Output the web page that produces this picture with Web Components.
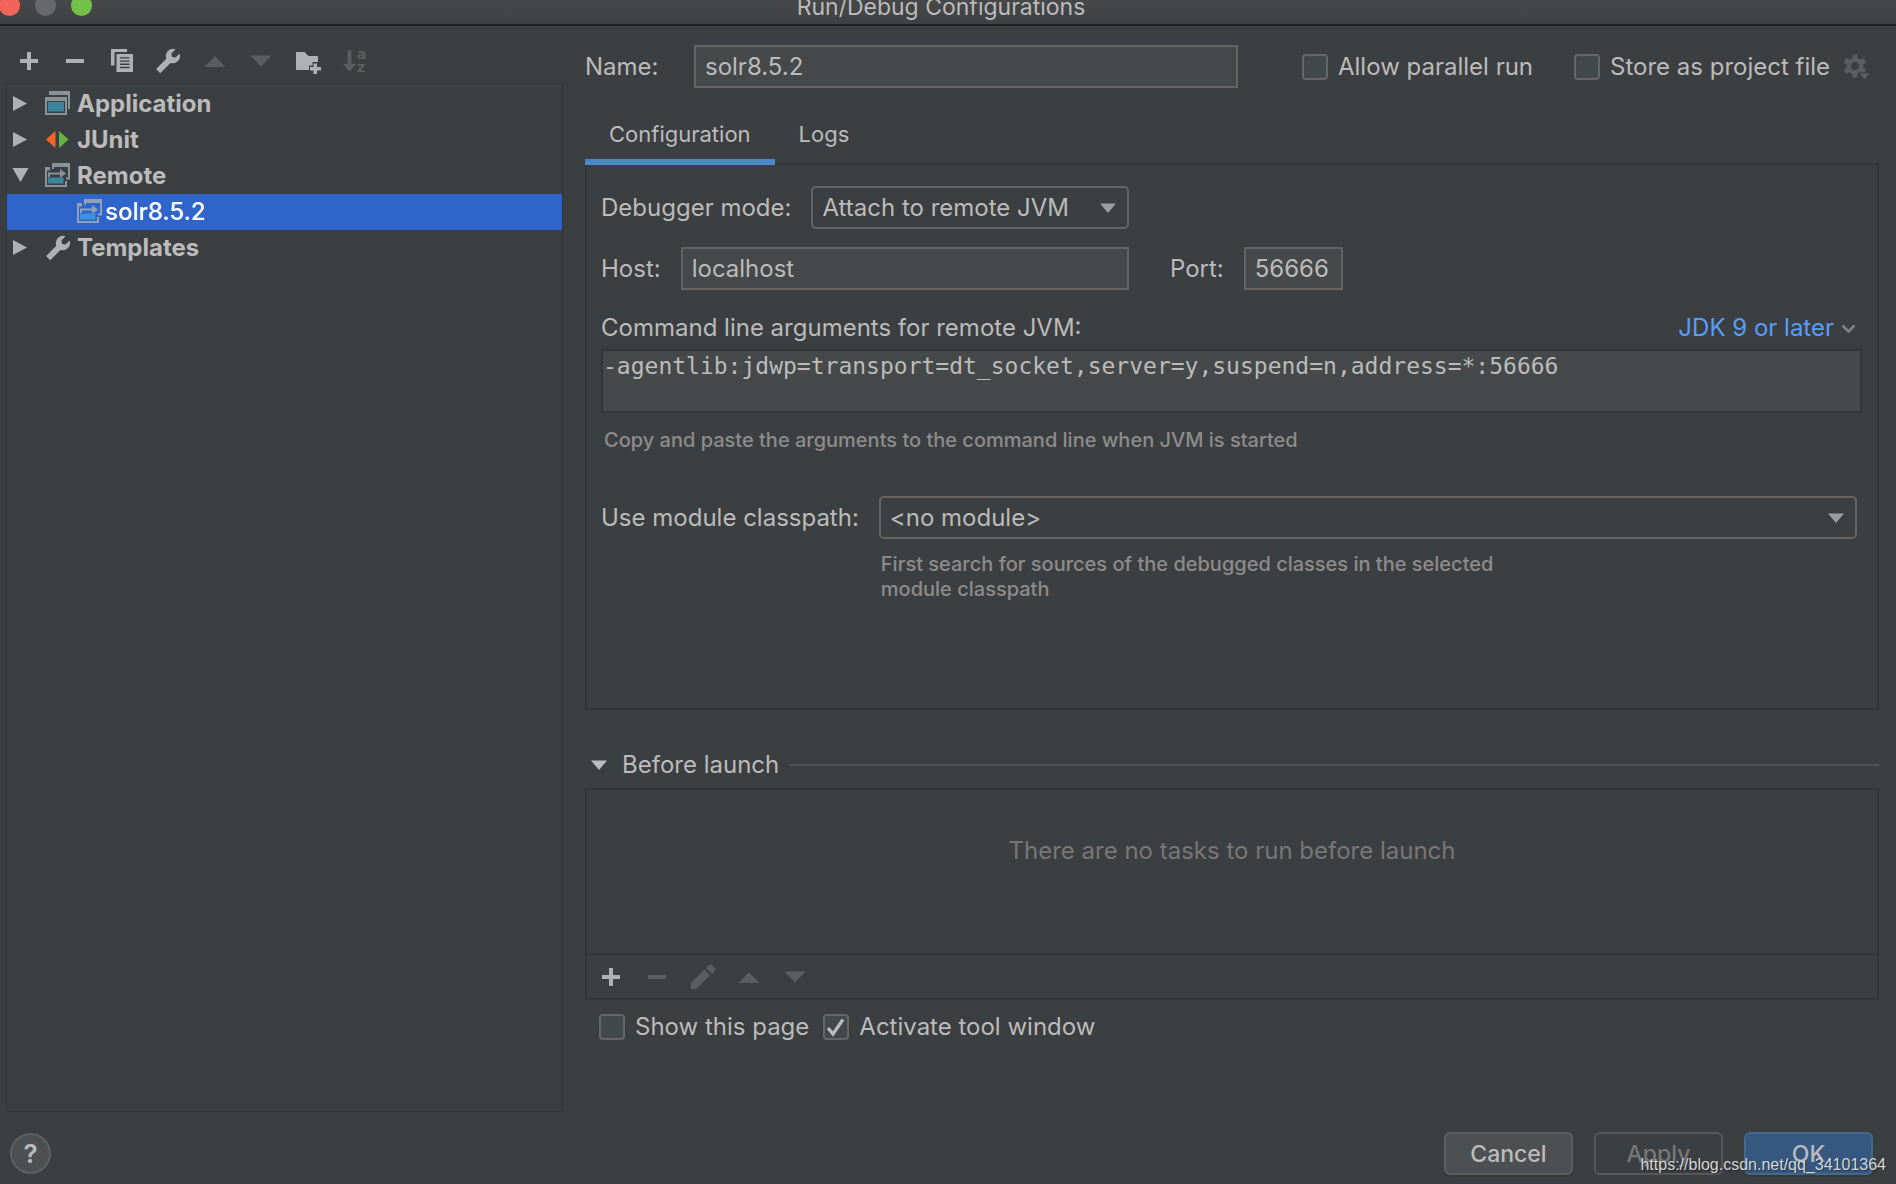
<!DOCTYPE html>
<html lang="en">
<head>
<meta charset="utf-8">
<title>Run/Debug Configurations</title>
<style>
  html, body { margin: 0; }
  body {
    background: #3c3f41;
    color: #bbbbbb;
    font: 24px/36px Inter, "Liberation Sans", sans-serif;
    --line: #343536;
    --field: #45494a;
    --field-border: #646464;
    --muted: #8c8c8c;
    --disabled: #5c5d5e;
  }
</style>
</head>
<body>
<run-config-dialog></run-config-dialog>

<script>
const ICONS = {
  add: '<path d="M12 5h4v7h7v4h-7v7h-4v-7H5v-4h7z"/>',
  remove: '<path d="M5 12h18v4H5z"/>',
  copy: '<path d="M3 2h16v3H6.500v13.500H3z"/><path fill-rule="evenodd" d="M8.500 7H25v18H8.500zM12 10.200v1.400h9.500v-1.400zM12 13.400v1.400h9.500v-1.400zM12 16.600v1.400h9.500v-1.400zM12 19.800v1.400h9.500v-1.400z"/>',
  wrench: '<path d="M21.500 2.300L17.400 6.500l.7 3.400 3.400.7 4.100-4.100A7.300 7.300 0 0 1 16.500 15.900L6.200 26.200 2.100 22.100 12.300 11.700A7.300 7.300 0 0 1 21.500 2.300z"/>',
  up: '<path d="M3.500 20L14 9l10.500 11z"/>',
  down: '<path d="M3.500 8.500h21L14 19.500z"/>',
  folder: '<path d="M2 5h8.500l4 4H24v6h-5.500v3.500H15V23H2z"/><path d="M19.500 16.500h3.500v3.500h4v3.500h-4V27h-3.500v-3.500h-3.500V20h3.500z"/>',
  sort: '<path d="M7.500 3.500h4V17H16l-6.500 7.500L3 17h4.500z"/><text x="17" y="12" font-family="DejaVu Sans" font-weight="700" font-size="14">a</text><text x="17" y="25" font-family="DejaVu Sans" font-weight="700" font-size="14">z</text>',
  pencil: '<path d="M2 26v-6L15.500 6.500l5.500 5.500L7.500 26zM17 5l3-3q1.500-1 3 0l3 3q1 1.500 0 3l-3 3z"/>',
  gear: '<circle cx="13" cy="13" r="8.500"/><path id="t" d="M10.500 1.500h5v23h-5z"/><path d="M10.500 1.500h5v23h-5z" transform="rotate(60 13 13)"/><path d="M10.500 1.500h5v23h-5z" transform="rotate(120 13 13)"/><circle cx="13" cy="13" r="4" fill="#3c3f41"/><path stroke="#3c3f41" stroke-width="2" paint-order="stroke" d="M17.500 20.500h10L22.500 26.500z"/>',
  twistyRight: '<path d="M7 6L21 13.500 7 21z"/>',
  twistyDown: '<path d="M6.500 6h16L14.500 20z"/>',
  arrow: '<path d="M6 9.500h16L14 19z"/>',
  chevron: '<path fill="none" stroke="currentColor" stroke-width="2.500" d="M8.500 11.500l6 6 6-6"/>',
  check: '<path fill="none" stroke="currentColor" stroke-width="3.200" d="M6 15l5 6L21 6.500"/>',
  application: '<g fill="#87939a"><path d="M5 1h21v18h-2V5H5z"/><path fill-rule="evenodd" d="M1 7h22v18H1zm2 4v12h18V11z"/></g><path fill="#3e86a0" d="M4 12h16v9.500H4z"/>',
  junit: '<path fill="#f26522" d="M11.500 5v17L2 13.500z"/><path fill="#62b543" d="M15 5v17l9.500-8.500z"/>',
  remote: '<g fill="var(--frame, #87939a)"><path d="M8 1h18v16.500h-4v-2h2V5h-14v2H8z"/><path d="M1 5h5v3.500H3V23h18v-4h2v6H1z"/><path d="M4 10.500h12V7l6 4.500-6 4.500v-3.500H6V15H4z"/></g><path fill="var(--accent, #3e86a0)" d="M4 15.500h15.500v6H4z"/>'
};

function define(name, markup, setup) {
  customElements.define(name, class extends HTMLElement {
    constructor() {
      super();
      const root = this.attachShadow({ mode: 'open' });
      const t = document.createElement('template');
      t.innerHTML = '<style>*{box-sizing:border-box}button,input,select,textarea{font:inherit;color:inherit;margin:0;border-radius:0;outline:0}</style>' + markup(this);
      root.append(t.content.cloneNode(true));
      if (setup) setup(this, root);
    }
  });
}
const attr = (el, name, fallback = '') => el.getAttribute(name) ?? fallback;

define('ui-icon', el => `
  <style>:host{display:block;flex:none;width:28px;height:28px}svg{display:block}</style>
  <svg width="28" height="28" viewBox="0 0 28 28" fill="currentColor" aria-hidden="true">${ICONS[attr(el, 'name')]}</svg>`);

define('tool-button', el => `
  <style>
    :host{display:block;color:#afb1b3}
    :host([disabled]){color:var(--disabled)}
    button{display:block;padding:0;border:0;background:none}
    button:disabled{color:inherit}
  </style>
  <button type="button" aria-label="${attr(el, 'label')}" ${el.hasAttribute('disabled') ? 'disabled' : ''}><ui-icon name="${attr(el, 'icon')}"></ui-icon></button>`);

define('title-bar', () => `
  <style>
    :host{display:grid;grid-template-columns:1fr auto 1fr;box-sizing:border-box;height:26px;padding-right:14px;overflow:hidden;border-bottom:2px solid #1f2021;background:linear-gradient(#464849,#3e4041)}
    .lights{display:flex;gap:15px;margin:-5px 0 0 -1px}
    .lights i{width:21px;height:21px;border-radius:50%;background:#666869}
    .lights i:first-child{background:#f0645a}
    .lights i:last-child{background:#72c148}
    h1{margin:-11px 0 0;font:inherit;font-size:23px;line-height:36px}
  </style>
  <div class="lights"><i></i><i></i><i></i></div>
  <h1><slot></slot></h1>
  <span></span>`);

define('tree-row', el => `
  <style>
    :host{display:flex;align-items:center;height:36px;font-weight:700}
    .twisty{margin-left:-1px;color:#afb1b3}
    .kind{margin:0 5px 0 10px;color:#afb1b3}
    :host([leaf]) .twisty{display:none}
    :host([leaf]) .kind{margin:0 1px 0 69px}
    :host([selected]){background:#2f65ca;color:#fff;font-weight:500;--frame:#8fa0b8;--accent:#3a93dc}
  </style>
  <ui-icon class="twisty" name="${attr(el, 'twisty', 'twistyRight')}"></ui-icon>
  <ui-icon class="kind" name="${attr(el, 'icon')}"></ui-icon>
  <span><slot></slot></span>`);

define('config-tree', () => `
  <style>
    :host{display:flex;flex-direction:column;padding-top:21px}
    .tools{display:flex;justify-content:space-between;width:353px;margin:0 0 8px 9px}
    .rows{flex:1;border:1px solid var(--line);padding-top:2px}
  </style>
  <div class="tools">
    <tool-button icon="add" label="Add"></tool-button>
    <tool-button icon="remove" label="Remove"></tool-button>
    <tool-button icon="copy" label="Copy"></tool-button>
    <tool-button icon="wrench" label="Edit templates"></tool-button>
    <tool-button icon="up" label="Move up" disabled></tool-button>
    <tool-button icon="down" label="Move down" disabled></tool-button>
    <tool-button icon="folder" label="New folder"></tool-button>
    <tool-button icon="sort" label="Sort" disabled></tool-button>
  </div>
  <div class="rows"><slot></slot></div>`);

define('text-field', el => `
  <style>
    :host{display:flex;align-items:center;gap:20px}
    label{flex:none;min-width:var(--label, 0)}
    input{flex:var(--input, 1);min-width:0;height:43px;padding:0 9px;border:2px solid var(--field-border);background:var(--field)}
  </style>
  <label for="f"><slot></slot></label><input id="f" type="text" size="5" value="${attr(el, 'value')}">`);

define('combo-box', el => `
  <style>
    :host{display:grid;grid-template-columns:auto 1fr;align-items:center;column-gap:20px}
    .box{display:grid;align-items:center}
    select,ui-icon{grid-area:1/1}
    select{appearance:none;width:100%;height:43px;padding:0 40px 0 9px;border:2px solid var(--field-border);border-radius:5px;background:transparent}
    ui-icon{justify-self:end;margin-right:7px;color:#9a9da0;pointer-events:none}
    ::slotted([slot=hint]){grid-column:2}
  </style>
  <label for="s"><slot></slot></label>
  <div class="box"><select id="s"><option></option></select><ui-icon name="arrow"></ui-icon></div>
  <slot name="hint"></slot>`,
  (el, root) => { root.querySelector('option').textContent = attr(el, 'value'); });

define('hint-text', () => `
  <style>:host{display:block;color:var(--muted);font-size:20px;font-weight:500;line-height:25px}</style><slot></slot>`);

define('check-option', el => `
  <style>
    :host{display:block}
    label{display:flex;align-items:center;gap:10px;height:26px;white-space:nowrap}
    .box{display:grid;place-content:center;place-items:center;width:26px;height:26px}
    input,ui-icon{grid-area:1/1}
    input{appearance:none;width:26px;height:26px;border:2px solid #646667;border-radius:4px;background:#43494a}
    ui-icon{visibility:hidden;pointer-events:none}
    input:checked + ui-icon{visibility:visible}
  </style>
  <label><span class="box"><input type="checkbox" ${el.hasAttribute('checked') ? 'checked' : ''}><ui-icon name="check"></ui-icon></span><span><slot></slot></span></label>`);

define('push-button', el => `
  <style>
    :host{display:block}
    button{display:block;width:129px;height:43px;padding:0;border:2px solid #5e6060;border-radius:6px;background:#4c5052;box-shadow:0 2px 1px #37393b;font-size:23px;font-weight:500}
    :host([primary]) button{background:#365880;border-color:#43688c}
    button:disabled{background:none;color:#777777;box-shadow:none;border-color:#575959}
  </style>
  <button type="button" ${el.hasAttribute('disabled') ? 'disabled' : ''}><slot></slot></button>`);

define('tab-strip', () => `
  <style>
    :host{display:flex;height:62px;margin:15px 0 -2px;position:relative;font-size:22px}
    button{padding:5px 24px 0;border:0;border-bottom:6px solid transparent;background:none}
    button[aria-selected=true]{border-color:#4a88c7}
  </style>
  <button type="button" role="tab" aria-selected="true">Configuration</button>
  <button type="button" role="tab" aria-selected="false">Logs</button>`);

define('remote-settings', () => `
  <style>
    :host{display:block;min-height:547px;border:2px solid var(--line);padding:21px 15px 0 14px}
    .connection{display:grid;grid-template-columns:528fr 734fr;gap:18px 41px;padding-right:0}
    .connection{grid-template-columns:528fr 692fr}
    .mode,.host{grid-column:1}
    .host,.port{grid-row:2}
    .port{--input:0 0 99px}
    .args{display:flex;justify-content:space-between;align-items:center;margin:20px 0 3px}
    .args button{display:flex;align-items:center;padding:0;border:0;background:none;color:#589df6}
    .args ui-icon{color:#7f8385}
    textarea{display:block;width:100%;height:64px;padding:0;border:2px solid var(--line);background:var(--field);font:23px/30px "DejaVu Sans Mono","Liberation Mono",monospace;resize:none}
    .copy{margin:15px 3px 43px}
    .module{margin-right:5px}
    .module hint-text{max-width:660px;margin:13px 2px 0}
  </style>
  <div class="connection">
    <combo-box class="mode" value="Attach to remote JVM">Debugger mode:</combo-box>
    <text-field class="host" value="localhost">Host:</text-field>
    <text-field class="port" value="56666">Port:</text-field>
  </div>
  <div class="args"><label for="args">Command line arguments for remote JVM:</label><button type="button">JDK 9 or later<ui-icon name="chevron"></ui-icon></button></div>
  <textarea id="args" spellcheck="false">-agentlib:jdwp=transport=dt_socket,server=y,suspend=n,address=*:56666</textarea>
  <hint-text class="copy">Copy and paste the arguments to the command line when JVM is started</hint-text>
  <combo-box class="module" value="&lt;no module&gt;">Use module classpath:<hint-text slot="hint">First search for sources of the debugged classes in the selected module classpath</hint-text></combo-box>`);

define('before-launch', () => `
  <style>
    :host{display:block;margin-top:37px}
    h2{display:flex;align-items:center;margin:0 0 5px;font:inherit}
    h2 ui-icon{margin-right:9px}
    h2::after{content:"";flex:1;height:2px;margin-left:11px;background:#505253}
    .frame{border:2px solid var(--line)}
    .list{height:163px;padding-top:43px;text-align:center;color:#777777}
    .tools{display:flex;align-items:center;gap:18px;height:45px;padding-left:10px;border-top:2px solid var(--line)}
    .options{display:flex;gap:14px;margin:14px 0 0 14px}
  </style>
  <h2><ui-icon name="arrow"></ui-icon>Before launch</h2>
  <div class="frame">
    <div class="list">There are no tasks to run before launch</div>
    <div class="tools">
      <tool-button icon="add" label="Add task"></tool-button>
      <tool-button icon="remove" label="Remove task" disabled></tool-button>
      <tool-button icon="pencil" label="Edit task" disabled></tool-button>
      <tool-button icon="up" label="Move task up" disabled></tool-button>
      <tool-button icon="down" label="Move task down" disabled></tool-button>
    </div>
  </div>
  <div class="options"><check-option>Show this page</check-option><check-option checked>Activate tool window</check-option></div>`);

define('dialog-footer', () => `
  <style>
    :host{display:flex;align-items:center;gap:21px;padding:20px 23px 9px 10px}
    .help{width:41px;height:41px;margin-right:auto;padding:0;border:2px solid #5e6060;border-radius:50%;background:#4c5052;font-weight:600;font-size:26px;line-height:36px}
  </style>
  <button class="help" type="button" aria-label="Help">?</button>
  <push-button>Cancel</push-button>
  <push-button disabled>Apply</push-button>
  <push-button primary>OK</push-button>`);

define('page-watermark', () => `
  <style>:host{position:absolute;right:10px;bottom:8px;font:16px/22px "Liberation Sans",sans-serif;color:#d4d6d8;text-shadow:1px 1px 1px #0006}</style><slot></slot>`);

define('run-config-dialog', () => `
  <style>
    :host{display:flex;flex-direction:column;min-height:100vh;position:relative}
    main{flex:1;display:grid;grid-template-columns:557fr 1294fr;gap:22px;padding:0 17px 0 6px}
    .name{display:flex;align-items:center;padding-top:19px}
    .name text-field{width:653px;gap:0;--label:109px;margin-right:64px}
    .name check-option{margin-right:41px}
    .name check-option + check-option{margin-right:12px}
  </style>
  <title-bar>Run/Debug Configurations</title-bar>
  <main>
    <config-tree>
      <tree-row icon="application">Application</tree-row>
      <tree-row icon="junit">JUnit</tree-row>
      <tree-row icon="remote" twisty="twistyDown">Remote</tree-row>
      <tree-row icon="remote" leaf selected>solr8.5.2</tree-row>
      <tree-row icon="wrench">Templates</tree-row>
    </config-tree>
    <section>
      <div class="name">
        <text-field value="solr8.5.2">Name:</text-field>
        <check-option>Allow parallel run</check-option>
        <check-option>Store as project file</check-option>
        <tool-button icon="gear" label="Storage options" disabled></tool-button>
      </div>
      <tab-strip></tab-strip>
      <remote-settings></remote-settings>
      <before-launch></before-launch>
    </section>
  </main>
  <dialog-footer></dialog-footer>
  <page-watermark>https://blog.csdn.net/qq_34101364</page-watermark>`);
</script>
</body>
</html>
